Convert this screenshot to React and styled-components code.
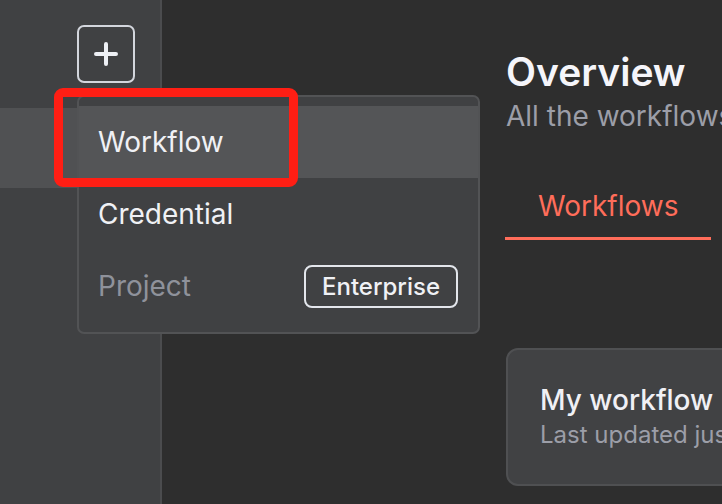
import React from "react";
import styled, { createGlobalStyle } from "styled-components";

const Global = createGlobalStyle`
  html, body { margin: 0; padding: 0; background: #2e2e2e; }
  body { font-family: Inter, "Noto Sans", sans-serif; -webkit-font-smoothing: antialiased; }
  * { box-sizing: border-box; }
`;

const Page = styled.div`
  position: relative;
  display: flex;
  width: 722px;
  height: 504px;
  overflow: hidden;
  background: #2e2e2e;
`;

const Sidebar = styled.aside`
  flex: 0 0 162px;
  display: flex;
  flex-direction: column;
  background: #404143;
  border-right: 2px solid #4b4c4e;
`;

const SidebarTop = styled.div`
  height: 108px;
  padding: 25px 0 0 77px;
`;

const PlusButton = styled.button`
  width: 58px;
  height: 58px;
  display: flex;
  align-items: center;
  justify-content: center;
  padding: 0;
  background: transparent;
  border: 2px solid #d3d6dd;
  border-radius: 7px;
  color: #eef0f5;
`;

const SideItem = styled.div`
  height: 80px;
  background: ${(p) => (p.$active ? "#505153" : "transparent")};
`;

const Main = styled.main`
  flex: 1;
  min-width: 0;
  padding: 48px 0 0 344px;
  display: flex;
  flex-direction: column;
`;

const Title = styled.h1`
  margin: 0;
  font-size: 39px;
  line-height: 48px;
  font-weight: 600;
  color: #f5f5fa;
  white-space: nowrap;
`;

const Subtitle = styled.p`
  margin: 2px 0 0;
  font-size: 28px;
  line-height: 36px;
  color: #9c9ea8;
  white-space: nowrap;
`;

const Tabs = styled.div`
  display: flex;
  margin-top: 42px;
  margin-left: -1px;
`;

const Tab = styled.div`
  padding: 12px 33px 13px 33px;
  font-size: 28px;
  line-height: 36px;
  color: ${(p) => (p.$active ? "#ff6d5a" : "#c4c6cc")};
  border-bottom: 3px solid ${(p) => (p.$active ? "#ff6d5a" : "transparent")};
  white-space: nowrap;
  flex-shrink: 0;
`;

const Card = styled.div`
  margin-top: 108px;
  width: 420px;
  flex-shrink: 0;
  height: 138px;
  padding: 32px 32px;
  background: #414244;
  border: 2px solid #4f5052;
  border-radius: 12px;
  white-space: nowrap;
`;

const CardTitle = styled.div`
  font-size: 28px;
  line-height: 36px;
  font-weight: 500;
  color: #f0f0f5;
`;

const CardMeta = styled.div`
  font-size: 24px;
  line-height: 34px;
  color: #9c9ea8;
`;

const Menu = styled.div`
  position: absolute;
  left: 77px;
  top: 95px;
  width: 403px;
  padding: 9px 0 10px;
  background: #404143;
  border: 2px solid #525355;
  border-radius: 7px;
`;

const MenuItem = styled.div`
  height: 72px;
  display: flex;
  align-items: center;
  justify-content: space-between;
  padding: 0 20px 0 19px;
  font-size: 28px;
  color: ${(p) => (p.$disabled ? "#8f929b" : "#f0f1f5")};
  background: ${(p) => (p.$active ? "#545557" : "transparent")};
`;

const Badge = styled.span`
  height: 43px;
  display: inline-flex;
  align-items: center;
  padding: 0 16px;
  border: 2px solid #e3e6ec;
  border-radius: 8px;
  font-size: 24px;
  font-weight: 500;
  color: #f0f1f5;
`;

const Highlight = styled.div`
  position: absolute;
  left: 54px;
  top: 88px;
  width: 244px;
  height: 99px;
  border: 9px solid #ff1e14;
  border-radius: 9px;
  pointer-events: none;
`;

export default function App() {
  return (
    <>
      <Global />
      <Page>
        <Sidebar>
          <SidebarTop>
            <PlusButton aria-label="Add">
              <svg width="26" height="26" viewBox="0 0 26 26" fill="none">
                <path d="M13 3v20M3 13h20" stroke="currentColor" strokeWidth="4" strokeLinecap="round" />
              </svg>
            </PlusButton>
          </SidebarTop>
          <SideItem $active />
        </Sidebar>
        <Main>
          <Title>Overview</Title>
          <Subtitle>All the workflows, credentials and executions you have access to</Subtitle>
          <Tabs>
            <Tab $active>Workflows</Tab>
            <Tab>Credentials</Tab>
          </Tabs>
          <Card>
            <CardTitle>My workflow</CardTitle>
            <CardMeta>Last updated just now | Created 1 May</CardMeta>
          </Card>
        </Main>
        <Menu>
          <MenuItem $active>Workflow</MenuItem>
          <MenuItem>Credential</MenuItem>
          <MenuItem $disabled>
            Project
            <Badge>Enterprise</Badge>
          </MenuItem>
        </Menu>
        <Highlight />
      </Page>
    </>
  );
}
